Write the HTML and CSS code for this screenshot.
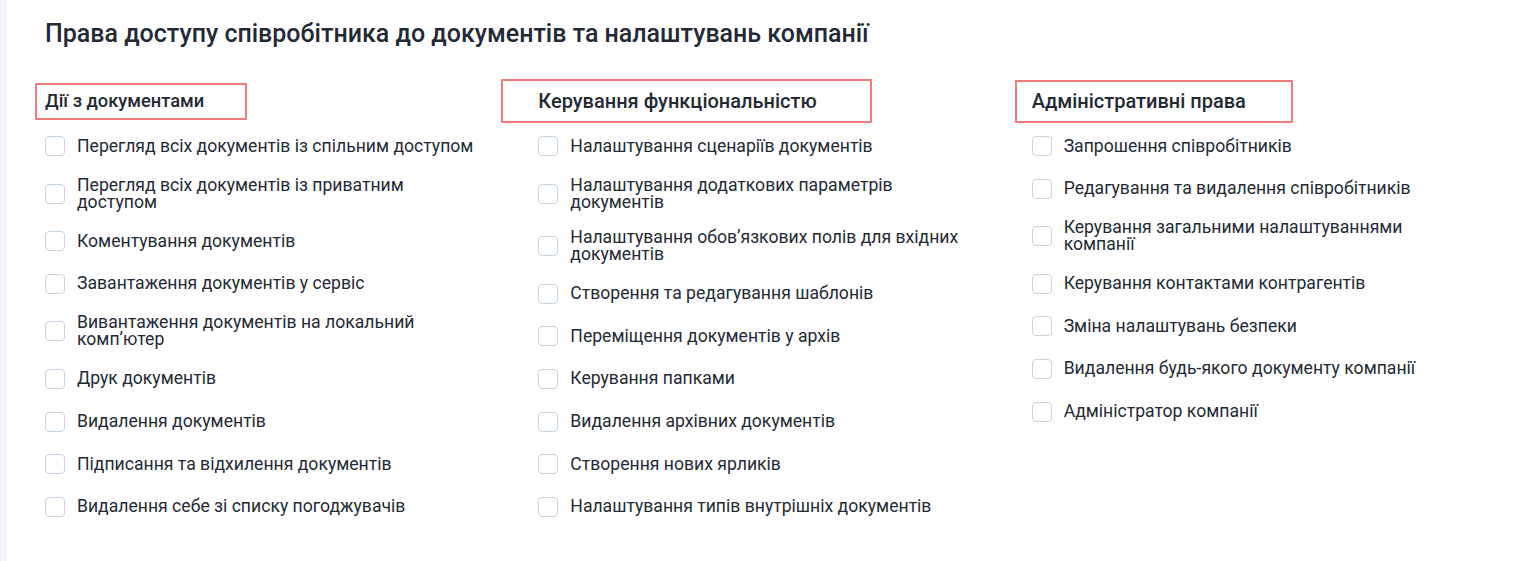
FILE: index.html
```html
<!DOCTYPE html>
<html lang="uk">
<head>
<meta charset="utf-8">
<title>Права доступу</title>
<link rel="stylesheet" href="styles.css">
</head>
<body>
<div class="page">
  <div class="strip"></div>
  <main class="main">
    <h1 class="title">Права доступу співробітника до документів та налаштувань компанії</h1>
    <div class="columns">
      <section class="column">
        <h2 class="section-head section-head-compact">Дії з документами<span class="mark mark-1"></span></h2>
        <ul class="list">
          <li class="row"><span class="box"></span><span class="label">Перегляд всіх документів із спільним доступом</span></li>
          <li class="row"><span class="box"></span><span class="label">Перегляд всіх документів із приватним доступом</span></li>
          <li class="row"><span class="box"></span><span class="label">Коментування документів</span></li>
          <li class="row"><span class="box"></span><span class="label">Завантаження документів у сервіс</span></li>
          <li class="row"><span class="box"></span><span class="label">Вивантаження документів на локальний комп’ютер</span></li>
          <li class="row"><span class="box"></span><span class="label">Друк документів</span></li>
          <li class="row"><span class="box"></span><span class="label">Видалення документів</span></li>
          <li class="row"><span class="box"></span><span class="label">Підписання та відхилення документів</span></li>
          <li class="row"><span class="box"></span><span class="label">Видалення себе зі списку погоджувачів</span></li>
        </ul>
      </section>
      <section class="column">
        <h2 class="section-head">Керування функціональністю<span class="mark mark-2"></span></h2>
        <ul class="list">
          <li class="row"><span class="box"></span><span class="label">Налаштування сценаріїв документів</span></li>
          <li class="row"><span class="box"></span><span class="label">Налаштування додаткових параметрів документів</span></li>
          <li class="row"><span class="box"></span><span class="label">Налаштування обов’язкових полів для вхідних документів</span></li>
          <li class="row"><span class="box"></span><span class="label">Створення та редагування шаблонів</span></li>
          <li class="row"><span class="box"></span><span class="label">Переміщення документів у архів</span></li>
          <li class="row"><span class="box"></span><span class="label">Керування папками</span></li>
          <li class="row"><span class="box"></span><span class="label">Видалення архівних документів</span></li>
          <li class="row"><span class="box"></span><span class="label">Створення нових ярликів</span></li>
          <li class="row"><span class="box"></span><span class="label">Налаштування типів внутрішніх документів</span></li>
        </ul>
      </section>
      <section class="column">
        <h2 class="section-head">Адміністративні права<span class="mark mark-3"></span></h2>
        <ul class="list">
          <li class="row"><span class="box"></span><span class="label">Запрошення співробітників</span></li>
          <li class="row"><span class="box"></span><span class="label">Редагування та видалення співробітників</span></li>
          <li class="row"><span class="box"></span><span class="label">Керування загальними налаштуваннями компанії</span></li>
          <li class="row"><span class="box"></span><span class="label">Керування контактами контрагентів</span></li>
          <li class="row"><span class="box"></span><span class="label">Зміна налаштувань безпеки</span></li>
          <li class="row"><span class="box"></span><span class="label">Видалення будь-якого документу компанії</span></li>
          <li class="row"><span class="box"></span><span class="label">Адміністратор компанії</span></li>
        </ul>
      </section>
    </div>
  </main>
</div>
</body>
</html>
```

FILE: styles.css
```css
html, body {
  margin: 0;
  padding: 0;
  background: #ffffff;
}

body {
  font-family: Roboto, "Noto Sans", "Liberation Sans", sans-serif;
  color: #232a35;
}

.page {
  display: flex;
  min-height: 100vh;
}

.strip {
  width: 7px;
  flex-shrink: 0;
  background: #f3f7fb;
}

.main {
  flex: 1;
  padding: 20px 0 0 38px;
}

.title {
  margin: 0;
  font-size: 25px;
  line-height: 28px;
  font-weight: 500;
  color: #232a35;
}

.columns {
  display: grid;
  grid-template-columns: repeat(3, 1fr);
  width: 1480px;
  margin-top: 42px;
}

.section-head {
  position: relative;
  margin: 0 0 22px;
  font-size: 20px;
  line-height: 22px;
  font-weight: 500;
  color: #232a35;
}

.section-head-compact {
  font-size: 18.3px;
}

.mark {
  position: absolute;
  border: 2px solid #f47a7a;
  border-radius: 1px;
  box-sizing: border-box;
  pointer-events: none;
}

.mark-1 {
  left: -10px;
  top: -7px;
  width: 212px;
  height: 37px;
}

.mark-2 {
  left: -37px;
  top: -11px;
  width: 371px;
  height: 44px;
}

.mark-3 {
  left: -17px;
  top: -10px;
  width: 278px;
  height: 43px;
}

.list {
  list-style: none;
  margin: 0;
  padding: 0;
  display: flex;
  flex-direction: column;
  gap: 18.6px;
}

.row {
  display: flex;
  align-items: center;
  gap: 12px;
  min-height: 24px;
}

.box {
  flex-shrink: 0;
  width: 20px;
  height: 20px;
  box-sizing: border-box;
  border: 1px solid #c5d3e3;
  border-radius: 4px;
  background: #ffffff;
}

.label {
  max-width: 402px;
  font-size: 17.6px;
  line-height: 17px;
  color: #232a35;
}
```
